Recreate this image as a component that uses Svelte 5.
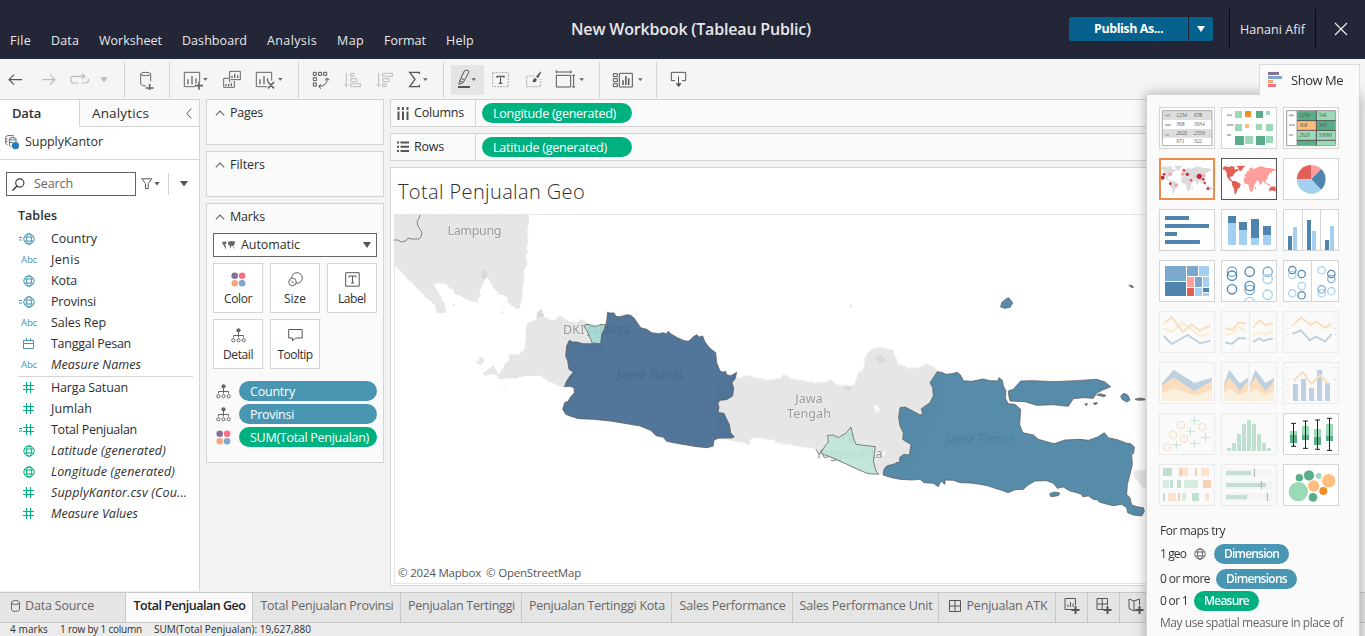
<script>
  // Spreads a label over the width reserved for it.
  function fit(node, width) {
    if (!width) return;
    node.style.letterSpacing = '0px';
    const natural = node.getBoundingClientRect().width;
    node.style.letterSpacing = `${(width - natural) / node.textContent.length}px`;
  }

  const menus = [['File', 21], ['Data', 28], ['Worksheet', 63], ['Dashboard', 65], ['Analysis', 50], ['Map', 27], ['Format', 42], ['Help', 28]];

  const dimensions = [
    ['geo', 'Country', 46, true], ['abc', 'Jenis', 29], ['geo', 'Kota', 26], ['geo', 'Provinsi', 45, true],
    ['abc', 'Sales Rep', 55], ['date', 'Tanggal Pesan', 80], ['abc', 'Measure Names', 90, false, true]
  ];
  const measures = [
    ['num', 'Harga Satuan', 77], ['num', 'Jumlah', 41], ['num', 'Total Penjualan', 86, true],
    ['geo', 'Latitude (generated)', 115, false, true], ['geo', 'Longitude (generated)', 124, false, true],
    ['num', 'SupplyKantor.csv (Cou...', 136, false, true], ['num', 'Measure Values', 87, false, true]
  ];

  const sheets = [
    ['Total Penjualan Geo', 112, 127, true], ['Total Penjualan Provinsi', 133, 148], ['Penjualan Tertinggi', 107, 121],
    ['Penjualan Tertinggi Kota', 136, 150], ['Sales Performance', 106, 121], ['Sales Performance Unit', 133, 146]
  ];

  const barat = 'M653,453 L657,456 L672,456 L678,466 L690,467 L712,461 L722,463 L732,471 L742,485 L752,500 L770,505 L785,515 L808,518 L818,515 L828,518 L835,511 L842,518 L862,530 L885,540 L897,540 L912,526 L920,521 L928,528 L938,525 L945,543 L960,562 L977,575 L980,605 L990,630 L1000,634 L1006,630 L1010,641 L1022,644 L1030,640 L1040,634 L1036,652 L1026,665 L1031,680 L1028,705 L1010,716 L990,718 L984,727 L987,740 L984,754 L1002,757 L1010,775 L1018,790 L1022,815 L1033,828 L1025,831 L1005,831 L985,832 L972,837 L969,856 L950,860 L920,857 L860,847 L830,841 L820,829 L798,824 L782,808 L750,795 L710,788 L660,780 L610,775 L565,773 L540,765 L527,760 L518,745 L524,725 L535,720 L540,710 L553,695 L552,680 L540,676 L523,677 L530,660 L540,645 L550,633 L537,625 L533,600 L527,585 L530,555 L538,538 L548,543 L560,543 L580,548 L632,548 L635,520 L643,508 L650,480 Z';
  const jakarta = 'M585,491 L597,490 L605,495 L620,495 L632,491 L646,491 L643,505 L635,520 L632,548 L606,546 L603,536 L597,525 L592,510 L584,500 Z';
  const timur = 'M712,272 L725,274 L738,280 L755,278 L773,274 L782,283 L790,299 L815,301 L850,294 L870,299 L893,300 L897,290 L907,298 L910,315 L918,330 L916,352 L925,368 L945,370 L962,385 L959,430 L968,455 L1000,462 L1015,475 L1040,482 L1062,488 L1095,477 L1140,475 L1165,478 L1193,468 L1213,455 L1225,470 L1255,477 L1280,487 L1292,488 L1303,498 L1301,517 L1295,520 L1297,550 L1290,580 L1282,610 L1280,640 L1290,650 L1295,672 L1315,678 L1330,680 L1333,692 L1325,705 L1300,702 L1283,695 L1280,680 L1265,670 L1240,674 L1215,668 L1198,663 L1192,656 L1180,655 L1165,645 L1148,647 L1144,640 L1130,635 L1110,630 L1090,618 L1072,622 L1060,607 L1040,599 L1005,600 L985,612 L970,625 L945,626 L925,635 L905,628 L885,622 L865,615 L840,610 L810,606 L780,605 L760,598 L735,597 L735,610 L723,600 L715,617 L700,607 L672,605 L660,595 L635,597 L600,595 L575,590 L549,582 L552,565 L560,555 L585,548 L590,544 L598,545 L600,528 L612,520 L628,522 L633,490 L620,483 L608,475 L610,455 L600,435 L596,408 L600,380 L615,378 L635,388 L660,402 L668,400 L664,383 L690,365 L700,345 L698,320 L690,305 L700,290 Z';
  const madura = 'M925,330 L940,325 L962,300 L1000,299 L1060,302 L1130,299 L1190,295 L1215,303 L1232,317 L1210,326 L1190,336 L1180,352 L1150,350 L1120,353 L1105,376 L1060,371 L1010,373 L975,362 L930,360 L927,348 Z';
  const yogya = 'M383,463 L400,462 L415,470 L440,455 L453,438 L460,470 L468,490 L490,493 L526,497 L523,520 L520,540 L528,570 L536,580 L505,578 L480,568 L430,545 L390,527 L362,517 L375,495 L385,483 Z';
  const islets = 'M902,78 L905,65 L918,54 L926,50 L938,66 L930,79 L915,82 Z M1287,13 h8 l6,6 h-8 z M1262,345 l10,-8 l12,6 l6,14 l-10,6 l-14,-8 z M1305,355 l14,-4 l16,3 v3 l-20,1 z M1190,342 l10,-4 l18,5 l-6,4 z M1154,369 l8,-1 l-2,6 z M1180,367 l10,-3 l2,4 l-8,3 z M1049,638 l14,-5 l16,3 l-4,8 l-22,3 z';

  const americas = 'M334,502 l4,-3 l14,2 l6,-3 l10,3 l-2,5 l4,3 l5,-3 l4,5 l-7,3 l-6,7 l-4,7 l-6,1 l-3,6 l6,5 l5,5 l-3,1 l-9,-6 l-7,-11 l-1,-12 l-5,-8 l-6,1z M370,500 l8,-3 h10 l11,1 l-6,4 l-4,7 l-6,5 l-4,-6 l-2,-6z M360,543 l7,-2 l8,4 l10,6 l-3,9 l-7,7 l-4,14 l-4,-2 l-2,-15 l-6,-11z';
  const eurasia = 'M398,522 l5,-5 l-2,-5 l6,2 l3,-8 l7,-4 l4,5 l9,-3 l10,-5 l10,1 l8,4 l12,0 l10,3 l6,2 l-2,4 l-8,0 l-2,7 l-4,-4 l-3,6 l-4,8 l-3,7 l-4,4 l3,9 l-4,1 l-4,-8 l-4,1 l-3,9 l-4,-1 l-4,-10 l-6,-2 l1,5 l-7,5 l-5,-9 l-6,-6 l-1,-5 l-6,-1 l-3,3 l-5,-4 l-5,1z';
  const africa = 'M396,531 l10,-3 l12,3 l6,12 l5,1 l-5,9 l-1,9 l-6,11 l-5,1 l-3,-13 l-2,-9 l-10,-2 l-4,-7z M426,560 l3,-2 l-1,8 l-3,1z';
  const oceania = 'M467,564 l6,-6 l5,1 l4,-2 l5,9 l-3,7 l-7,-3 l-10,1z M461,548 l6,5 l5,1 l-3,2 l-7,-4z';
</script>

{#snippet tx(text, width, cls = '')}
  <span class="tx {cls}" use:fit={width}>{text}</span>
{/snippet}

{#snippet globe()}
  <svg class="globe" viewBox="0 0 12 12" width="12" height="12"><g fill="none" stroke="currentColor" stroke-width="1"><circle cx="6" cy="6" r="5.200" /><ellipse cx="6" cy="6" rx="2.400" ry="5.200" /><path d="M1.500,4H10.500M1.500,8H10.500" /></g></svg>
{/snippet}

{#snippet field([kind, name, width, calc, italic])}
  <div class="field {kind}">
    <span class="calc">{#if calc}<svg width="4" height="4" viewBox="0 0 4 4"><path d="M0,.5h3M0,3h3" stroke="currentColor" /></svg>{/if}</span>
    <span class="kind">
      {#if kind === 'geo'}{@render globe()}
      {:else if kind === 'abc'}{@render tx('Abc', 16, 'abctext')}
      {:else if kind === 'date'}<svg width="11" height="11" viewBox="0 0 11 11"><path d="M.5,2.5h10v8h-10zM.5,5.5h10M3.5,0v3M7.5,0v3" fill="none" stroke="currentColor" /></svg>
      {:else}<svg width="11" height="11" viewBox="0 0 11 11"><path d="M3.5,0v11M7.5,0v11M0,3.5h11M0,7.5h11" fill="none" stroke="currentColor" stroke-width="1.1" /></svg>{/if}
    </span>
    {@render tx(name, width, italic ? 'it' : '')}
  </div>
{/snippet}

{#snippet chevron()}
  <svg width="10" height="6" viewBox="0 0 10 6"><path d="M.8,5.3L5,1L9.2,5.3" fill="none" stroke="#666" stroke-width="1.1" /></svg>
{/snippet}

{#snippet dots()}
  <svg width="15" height="15" viewBox="0 0 15 15"><circle cx="3.7" cy="3.7" r="3.3" fill="#86709b" /><circle cx="11.1" cy="3.7" r="3.3" fill="#fb6f82" /><circle cx="3.7" cy="11.2" r="3.3" fill="#f5a57b" /><circle cx="11.1" cy="11.2" r="3.3" fill="#82a4cb" /></svg>
{/snippet}

{#snippet tree()}
  <svg width="15" height="15" viewBox="0 0 15 15"><circle cx="7.5" cy="2.3" r="2.1" fill="#666" /><path d="M7.500,4v5.500M2.500,9.500V7.500H12.500V9.500" fill="none" stroke="#666" /><g fill="none" stroke="#666"><circle cx="2.300" cy="12.300" r="1.600" /><circle cx="7.500" cy="12.300" r="1.600" /><circle cx="12.700" cy="12.300" r="1.600" /></g></svg>
{/snippet}

{#snippet lines(color, d)}<path {d} fill="none" stroke={color} stroke-width="5.5" />{/snippet}

<div class="app">
  <header>
    <nav>{#each menus as [m, w]}{@render tx(m, w)}{/each}</nav>
    <h1>{@render tx('New Workbook (Tableau Public)', 240)}</h1>
    <div class="account">
      <button class="publish">{@render tx('Publish As...', 69)}</button>
      <button class="more"><svg width="8" height="6" viewBox="0 0 8 6"><path d="M0,0H8L4,6z" fill="#fff" /></svg></button>
      <div class="user">{@render tx('Hanani Afif', 65)}</div>
      <svg class="close" width="14" height="14" viewBox="0 0 14 14"><path d="M1,1L13,13M13,1L1,13" stroke="#eee" stroke-width="1.2" /></svg>
    </div>
  </header>

  <div class="toolbar">
    <svg width="32" height="38" viewBox="0 0 96 114"><path d="M66,59H28M42,44L27,59L42,74" fill="none" stroke="#555" stroke-width="3.500" /></svg>
    <svg width="32" height="38" viewBox="96 0 96 114"><path d="M126,59H164M150,44L165,59L150,74" fill="none" stroke="#bbb" stroke-width="3.500" /></svg>
    <svg width="60" height="38" viewBox="192 0 180 114"><path d="M235,69H222a9,9 0 0 1 0,-20H254M246,41l9,8l-9,8M244,69h14a9,9 0 0 0 7,-12" fill="none" stroke="#bbb" stroke-width="3.500" /><path d="M301,52h22l-11,15z" fill="#bbb" /></svg>
    <i class="sep"></i>
    <svg width="44" height="38" viewBox="375 0 132 114"><g fill="none" stroke="#666" stroke-width="3"><ellipse cx="437" cy="42" rx="15" ry="5" /><path d="M422,42v30q4,6 15,6M452,42v22" /></g><path d="M437,84h24M449,72v18" stroke="#666" stroke-width="5" /></svg>
    <i class="sep"></i>
    <svg width="128" height="38" viewBox="510 0 384 114">
      <g fill="none" stroke="#666" stroke-width="3"><path d="M585,80H553V37H599V65M689,67V34H721V59H692M688,55H671V82H703V63M801,80H769V37H815V62" /></g>
      <path d="M564,58v15M576,48v25M588,55v15M696,54v-7M704,54V41M713,54V46M678,78v-6M686,78v-6M694,78v-8M780,58v15M792,48v25M803,55v10" stroke="#666" stroke-width="4" />
      <path d="M585,77h24M597,65v24M804,66l18,19M822,66l-18,19" stroke="#666" stroke-width="5" /><path d="M609,54h14l-7,8zM834,54h14l-7,8z" fill="#666" />
    </svg>
    <i class="sep"></i>
    <svg width="101" height="38" viewBox="897 0 303 114">
      <g fill="none" stroke="#555" stroke-width="3"><path d="M940,37h9v9h-9zM956,37h9v9h-9zM971,37h9v9h-9zM940,53h9v9h-9zM940,69h9v9h-9zM957,79q25,-1 25,-24M963,73l-7,6l7,7M975,61l7,-7l7,7" /></g>
      <g fill="none" stroke="#bbb" stroke-width="3"><path d="M1039,39v40M1033,73l6,6l6,-6M1052,40h10v9h-10zM1052,56h19v9h-19zM1052,71h29v9h-29zM1136,39v40M1130,73l6,6l6,-6M1148,40h29v9h-29zM1148,56h19v9h-19zM1148,71h10v9h-10z" /></g>
    </svg>
    <svg width="43" height="38" viewBox="0 180 129 114"><path d="M58,222V217H29L45,238L29,260H58V254" fill="none" stroke="#555" stroke-width="4" /><path d="M69,235h14l-7,8z" fill="#666" /></svg>
    <i class="sep"></i>
    <svg width="155" height="38" viewBox="132 180 465 114">
      <path d="M153,195h99v89h-99z" fill="#e4e4e4" />
      <path d="M174,258h36v6h-36z" fill="#555" /><g fill="none" stroke="#555" stroke-width="3"><path d="M179,243L193,213q5,-5 12,-1q2,2 1,6L190,247zM184,235l10,6M178,244l-1,9l12,-5" /></g>
      <path d="M214,235h14l-7,8zM538,235h14l-7,8z" fill="#666" />
      <path d="M278,218h47v42h-47z" fill="none" stroke="#aaa" stroke-width="3" stroke-dasharray="6 3" /><path d="M291,234v-5h21v5M301.500,229v21M296,250h11" fill="none" stroke="#555" stroke-width="3.500" />
      <path d="M403,228H380v32h42v-24" fill="none" stroke="#aaa" stroke-width="3" stroke-dasharray="6 3" /><path d="M422,214L408,230l6,5l9,-17zM406,234q-7,1 -8,13q10,1 13,-8z" fill="#555" />
      <path d="M469,226h43v35h-43zM469,216h44M469,211v9M513,211v9M521,226v35M516,226h9M516,261h9" fill="none" stroke="#555" stroke-width="3" />
    </svg>
    <i class="sep"></i>
    <svg width="56" height="38" viewBox="600 180 168 114"><path d="M640,221h12v9h-12zM640,236h12v9h-12zM640,251h12v9h-12zM658,220h39v41h-39z" fill="none" stroke="#555" stroke-width="3" /><path d="M669,255V241M677.500,255V228M686,255V235" stroke="#555" stroke-width="4.500" /><path d="M714,235h14l-7,8z" fill="#666" /></svg>
    <i class="sep"></i>
    <svg width="44" height="38" viewBox="771 180 132 114"><path d="M825,242H814V217H857V242H846M835.500,229v26" fill="none" stroke="#555" stroke-width="3" /><path d="M827,250h18l-9,12z" fill="#555" /></svg>
  </div>

  <main>
    <aside class="data">
      <div class="sidetabs">
        <div class="on">{@render tx('Data', 29)}</div>
        <div class="off">{@render tx('Analytics', 57)}<svg width="6" height="11" viewBox="0 0 6 11"><path d="M5.300,.5L.8,5.500L5.300,10.500" fill="none" stroke="#555" /></svg></div>
      </div>
      <div class="source">
        <svg width="15" height="15" viewBox="0 0 15 15"><g fill="none" stroke="#666" stroke-width="1"><path d="M9,.9Q1,-.5 .7,2.500V8Q1,9.500 2.500,9.700M1,4h1.500M1,6.500h1.500" /><ellipse cx="7.700" cy="3.800" rx="3.300" ry="1.200" /><path d="M4.400,4V10.500q1,1 2,1M11,4V7M4.500,7.500h3" /></g><circle cx="10.500" cy="10.700" r="3.600" fill="#2a7ab5" /></svg>
        {@render tx('SupplyKantor', 78)}
      </div>
      <div class="searchrow">
        <div class="search"><svg width="13" height="13" viewBox="0 0 13 13"><circle cx="7.800" cy="5" r="4.100" fill="none" stroke="#333" stroke-width="1.100" /><path d="M5,8L.5,12.500" stroke="#333" stroke-width="1.400" /></svg>{@render tx('Search', 39)}</div>
        <svg class="funnel" width="19" height="12" viewBox="0 0 19 12"><path d="M.8,.8h10L7.200,5.500V10.500H4.500V5.500z" fill="none" stroke="#555" /><path d="M13.500,4h5l-2.500,3.500z" fill="#555" /></svg>
        <i></i>
        <svg width="8" height="6" viewBox="0 0 8 6"><path d="M0,0H8L4,5.500z" fill="#555" /></svg>
      </div>
      <div class="tables">{@render tx('Tables', 39)}</div>
      <div class="fields">{#each dimensions as f}{@render field(f)}{/each}</div>
      <div class="fields second">{#each measures as f}{@render field(f)}{/each}</div>
    </aside>

    <div class="cards">
      <section class="card small"><h2>{@render chevron()}{@render tx('Pages', 33)}</h2></section>
      <section class="card small"><h2>{@render chevron()}{@render tx('Filters', 35)}</h2></section>
      <section class="card marks">
        <h2>{@render chevron()}{@render tx('Marks', 35)}</h2>
        <div class="select">
          <svg width="13" height="9" viewBox="0 0 13 9"><path d="M0,1l4,-.5l1,1l-2,2l1,2l-.5,3l-1,-3l-1.500,-2zM6,1l3,-1l4,.5l-.5,3l-2,2l-1,-1l-1,3l-1,-3l-1.500,-1zM11,6l1.500,.5v1.500z" fill="#666" /></svg>
          {@render tx('Automatic', 59)}
          <svg class="arrow" width="8" height="6" viewBox="0 0 8 6"><path d="M0,0H8L4,6z" fill="#555" /></svg>
        </div>
        <div class="buttons">
          <div>{@render dots()}{@render tx('Color', 28)}</div>
          <div><svg width="15" height="15" viewBox="0 0 15 15"><g fill="none" stroke="#666"><circle cx="9" cy="6" r="5.300" /><circle cx="4.500" cy="10" r="3.800" fill="#fff" /><path d="M3,8.500l3,3" /></g></svg>{@render tx('Size', 22)}</div>
          <div><svg width="15" height="15" viewBox="0 0 15 15"><path d="M.7,.7h13.500v13.500h-13.500zM4,5.500V4h7v1.500M7.500,4v7M6,11h3" fill="none" stroke="#555" /></svg>{@render tx('Label', 28)}</div>
          <div>{@render tree()}{@render tx('Detail', 30)}</div>
          <div><svg width="15" height="15" viewBox="0 0 15 15"><path d="M.7,1.500h13.500v8.500H7.500L4.500,13V10H.7z" fill="none" stroke="#555" /></svg>{@render tx('Tooltip', 35)}</div>
        </div>
        <div class="pillrow">{@render tree()}<div class="pill blue">{@render tx('Country', 45)}</div></div>
        <div class="pillrow">{@render tree()}<div class="pill blue">{@render tx('Provinsi', 44)}</div></div>
        <div class="pillrow">{@render dots()}<div class="pill green">{@render tx('SUM(Total Penjualan)', 119)}</div></div>
      </section>
    </div>

    <div class="work">
      <div class="shelf">
        <div class="name"><svg width="12" height="13" viewBox="0 0 12 13"><path d="M1.500,0v3M1.500,4.500V13M6,0v3M6,4.500V13M10.500,0v3M10.500,4.500V13" stroke="#555" stroke-width="2" /></svg>{@render tx('Columns', 50)}</div>
        <div class="pill green">{@render tx('Longitude (generated)', 123)}</div>
      </div>
      <div class="shelf">
        <div class="name"><svg width="12" height="12" viewBox="0 0 12 12"><path d="M0,1.500h2M3.500,1.500H12M0,5.700h2M3.500,5.700H12M0,10h2M3.500,10H12" stroke="#555" stroke-width="2" /></svg>{@render tx('Rows', 30)}</div>
        <div class="pill green">{@render tx('Latitude (generated)', 114)}</div>
      </div>
      <div class="view">
        <div class="title">{@render tx('Total Penjualan Geo', 187)}</div>
        <div class="map">
          <svg width="965" height="369" viewBox="394 214 965 369">
            <defs>
              <filter id="coast" filterUnits="userSpaceOnUse" x="380" y="200" width="800" height="400" color-interpolation-filters="sRGB">
                <feTurbulence type="fractalNoise" baseFrequency=".15" numOctaves="2" seed="4" result="n" />
                <feDisplacementMap in="SourceGraphic" in2="n" scale="3" xChannelSelector="R" yChannelSelector="G" />
              </filter>
            </defs>
            <g class="land" filter="url(#coast)">
              <g transform="translate(390 160) scale(.33333)">
                <path d="M-20,130 H416 L417,180 L412,210 L413,240 L410,270 L410,310 L403,330 L398,380 L396,410 L390,440 L380,445 L365,432 L353,425 L352,410 L340,402 L325,400 L310,380 L300,360 L292,350 L282,355 L280,375 L268,390 L273,405 L265,410 L260,425 L240,420 L200,400 L180,380 L150,365 L132,370 L145,395 L165,430 L168,455 L140,457 L135,435 L110,410 L85,385 L60,360 L30,330 L-20,285 Z" />
                <path d="M523,680 L500,672 L470,657 L445,645 L410,645 L380,650 L340,653 L325,650 L310,638 L285,645 L278,635 L295,625 L310,612 L325,640 L340,622 L355,600 L362,578 L385,582 L402,565 L408,530 L405,505 L415,485 L440,475 L438,460 L448,447 L460,455 L462,470 L490,478 L512,465 L535,478 L560,485 L574,473 L600,490 L640,500 L640,640 L550,650 Z" />
                <path d="M254,600l12,2l2,-14l12,4l4,10l-12,12zM186,428l8,2l2,5h-6zM338,684h10v2h-10zM330,456l8,-4l2,8zM334,442h7v4h-7z" />
              </g>
              <g transform="translate(700 280) scale(.33333)">
                <path d="M108,290 L150,282 L160,288 L200,297 L235,292 L255,280 L275,293 L320,302 L370,305 L395,295 L415,312 L445,315 L465,310 L475,275 L490,265 L497,225 L510,208 L540,198 L578,205 L582,225 L595,247 L625,260 L660,260 L680,247 L700,255 L712,272 L720,400 L660,500 L640,560 L590,560 L549,580 L536,578 L480,570 L365,518 L340,502 L290,495 L230,485 L220,475 L165,470 L150,475 L147,488 L105,480 L40,470 L40,300 Z" />
                <path d="M448,72l6,-2l4,8l-8,4zM1298,568l24,-2l22,8v50l-18,-6l-22,-30z" />
              </g>
            </g>
            <g class="relief" filter="url(#coast)"><path d="M482,270l4,-1l2,7l-4,3l-3,-3zM536,313l5,-4l3,7h-7zM875,356l6,-3l5,6l-6,5zM845,386l7,-1l-1,3l-5,1zM874,427l6,-1l-2,2z" /></g>
            <g class="lake" filter="url(#coast)"><path d="M873,406l4,-2l4,5l-4,3zM880,452l6,-3l-2,7z" /></g>
            <path d="M394,239l4,0l3,2l5,-1l2,-3l3,1l8,0l2,-2l1,-5l-4,-6l-1,-4l2,-4l1,-3" class="border" />
            <g class="labels">
              <text x="474.500" y="234" textLength="54">Lampung</text>
              <text x="596.500" y="333" textLength="67">DKI Jakarta</text>
              <text x="650.500" y="378" textLength="66">Jawa Barat</text>
              <text x="809" y="402">Jawa</text>
              <text x="809" y="417" textLength="44">Tengah</text>
              <text x="848" y="442" textLength="12">DI</text>
              <text x="849" y="457" textLength="67">Yogyakarta</text>
              <text x="980" y="442" textLength="68">Jawa Timur</text>
            </g>
            <g class="regions">
              <g transform="translate(390 160) scale(.33333)"><path d={barat} fill="#3b658c" /><path d={jakarta} fill="#9fd8d2" /></g>
              <g transform="translate(700 280) scale(.33333)"><path d={timur} fill="#427da0" /><path d={madura} fill="#427da0" /><path d={islets} fill="#427da0" /><path d={yogya} fill="#bee5d9" /></g>
            </g>
          </svg>
          <div class="credit">{@render tx('© 2024 Mapbox', 83)}{@render tx('© OpenStreetMap', 95)}</div>
        </div>
      </div>
    </div>
  </main>

  <footer>
    <div class="tabs">
      <div class="source-tab"><svg width="9" height="12" viewBox="0 0 9 12"><path d="M.5,2.500V9.500q0,2 4,2t4,-2V2.500M.5,2.500q0,-2 4,-2t4,2t-4,2t-4,-2" fill="none" stroke="#666" /></svg>{@render tx('Data Source', 69)}</div>
      {#each sheets as [name, w, total, active]}
        <div class:active style="width:{total}px">{@render tx(name, w)}</div>
      {/each}
      <div class="dash"><svg width="12" height="12" viewBox="0 0 12 12"><path d="M.5,.5h11v11h-11zM.5,6h11M6,.5v11" fill="none" stroke="#555" /></svg>{@render tx('Penjualan ATK', 81)}</div>
      <div class="add"><svg width="16" height="16" viewBox="0 0 16 16"><path d="M8,11.500H1V.5H11.500V7M4,9V6.500M6.500,9V4M9,9V5.500" fill="none" stroke="#555" /><path d="M7.500,12H15.500M11.500,8v8" stroke="#555" stroke-width="2" /></svg></div>
      <div class="add"><svg width="16" height="16" viewBox="0 0 16 16"><path d="M8,11.500H1V.5H11.500V7M1,6H11.500M6.200,.5v11" fill="none" stroke="#555" /><path d="M7.500,12H15.500M11.500,8v8" stroke="#555" stroke-width="2" /></svg></div>
      <div class="add"><svg width="16" height="16" viewBox="0 0 16 16"><path d="M6,13V3L1,1V10.500L6,13L8,12M6,3L11.500,1V7" fill="none" stroke="#555" /><path d="M7.500,12H15.500M11.500,8v8" stroke="#555" stroke-width="2" /></svg></div>
    </div>
    <div class="status">{@render tx('4 marks', 38)}{@render tx('1 row by 1 column', 82)}{@render tx('SUM(Total Penjualan): 19,627,880', 157)}</div>
  </footer>

  <div class="showtab"><svg width="15" height="15" viewBox="0 0 15 15"><path d="M0,0H11V3H0z" fill="#86709b" /><path d="M0,4H14V7H0z" fill="#82a4cb" /><path d="M0,8H5V11H0z" fill="#f5a57b" /><path d="M0,12H8V15H0z" fill="#fb6f82" /></svg>{@render tx('Show Me', 52)}</div>
  <div class="showme">
    <div class="thumbs">
      <svg class="t" viewBox="327 321 168 126">
        <path d="M337,332H486V437H337z" fill="#fff" /><path d="M337,332H486V360H337zM337,387H486V413H337z" fill="#ddd" /><path d="M337,332H486V437H337z" fill="none" stroke="#aaa" stroke-width="3" /><path d="M345,346h15M345,375h18M345,405h12" stroke="#aaa" stroke-width="5" />
        <g class="num"><text x="379" y="352">1234</text><text x="432" y="352">678</text><text x="379" y="379">368</text><text x="432" y="379">3034</text><text x="379" y="405">2620</text><text x="432" y="405">2559</text><text x="379" y="430">971</text><text x="432" y="430">322</text></g>
      </svg>
      <svg class="t" viewBox="513 321 168 126">
        <path d="M531,346h15M531,375h19M531,405h12" stroke="#bbb" stroke-width="6" />
        <path d="M555,333h21v21h-21zM648,333h12v12h-12zM555,372h21v21h-21zM618,372h18v18h-18zM648,372h21v21h-21zM585,408h24v24h-24zM648,408h21v21h-21z" fill="#9cdab7" /><path d="M618,333h21v21h-21zM555,408h27v27h-27zM618,408h27v27h-27z" fill="#59ad89" /><path d="M585,333h18v18h-18z" fill="#f28e2b" /><path d="M585,372h12v12h-12z" fill="#ffbe7d" />
      </svg>
      <svg class="t" viewBox="699 321 168 126">
        <path d="M741,332h58v31h-58zM799,363h58v29h-58zM741,420h58v16h-58z" fill="#59ad89" /><path d="M799,332h58v31h-58zM741,392h116v28h-116zM799,420h58v16h-58z" fill="#9cdab7" /><path d="M741,363h58v29h-58z" fill="#ffbe7d" />
        <path d="M710,332H857V437H710zM741,332V437" fill="none" stroke="#999" stroke-width="3" /><path d="M741,362H857M741,391H857M741,421H857M799,332V437" stroke="#555" stroke-width="3" /><path d="M717,346h14M717,375h18M717,405h12" stroke="#aaa" stroke-width="5" />
        <g class="num"><text x="748" y="351">1234</text><text x="806" y="351">546</text><text x="748" y="382">368</text><text x="806" y="382">340</text><text x="748" y="411">2620</text><text x="806" y="411">53890</text></g>
      </svg>
      <svg class="t orange" viewBox="333 480 156 114">
        <g fill="#dcdcdc"><path d={americas} /><path d={eurasia} /><path d={africa} /><path d={oceania} /></g>
        <g fill="#c4283c"><circle cx="338" cy="533" r="6" /><circle cx="342" cy="523" r="4" /><circle cx="412" cy="523" r="5" /><circle cx="448" cy="529" r="8" /><circle cx="361" cy="551" r="4" /><circle cx="460" cy="538" r="4" /><circle cx="474" cy="566" r="4" /></g><g fill="#e15f55"><circle cx="402" cy="511" r="5" /><circle cx="464" cy="548" r="4.500" /><circle cx="423" cy="541" r="4" /></g><g fill="#ff9d9a"><circle cx="361" cy="523" r="5" /><circle cx="398" cy="522" r="5" /><circle cx="378" cy="556" r="5" /><circle cx="462" cy="527" r="4" /></g>
      </svg>
      <svg class="t dark" viewBox="330 477 162 120"><g transform="translate(-14 -12) scale(1.040 1.024)"><path d={americas} fill="#e15f55" /><path d={eurasia} fill="#ff9d9a" /><path d={africa} fill="#ff9d9a" /><path d={oceania} fill="#e15f55" /></g></svg>
      <svg class="t" viewBox="699 474 168 126"><g transform="translate(783.500 538)"><path d="M0,0V-43A43,43 0 0 0 -43,0z" fill="#e15f55" /><path d="M0,0V-43A43,43 0 0 1 30,-31z" fill="#ff9d9a" /><path d="M0,0L30,-31A43,43 0 0 1 30,31z" fill="#4e84ae" /><path d="M0,0L30,31A43,43 0 0 1 -43,0z" fill="#a3cff0" /></g></svg>

      <svg class="t" viewBox="42 27 168 126"><path d="M60,48h72v12h-72zM60,72h132v12h-132zM60,96h36v12h-36zM60,120h105v12h-105z" fill="#4e84ae" /></svg>
      <svg class="t" viewBox="228 27 168 126"><path d="M249,69h24v66h-24zM282,90h24v45h-24zM318,114h24v21h-24zM354,105h24v30h-24z" fill="#a3cff0" /><path d="M249,48h24v21h-24zM282,66h24v24h-24zM318,57h24v57h-24zM354,78h24v27h-24z" fill="#4e84ae" /></svg>
      <svg class="t" viewBox="414 27 168 126"><path d="M472.500,27V153M526.500,27V153" stroke="#d4d4d4" stroke-width="3" /><path d="M429,108h12v42h-12zM486,60h12v90h-12zM540,120h12v30h-12z" fill="#4e84ae" /><path d="M444,81h12v69h-12zM501,93h12v57h-12zM555,78h12v72h-12z" fill="#a3cff0" /></svg>

      <svg class="t" viewBox="42 180 168 126"><path d="M60,198h63v45h-63zM126,198h33v30h-33zM150,231h21v30h-21z" fill="#7ba9ce" /><path d="M60,246h63v42h-63zM174,264h18v12h-18z" fill="#4e84ae" /><path d="M162,198h30v30h-30zM174,231h18v30h-18zM150,264h21v24h-21zM174,279h18v9h-18z" fill="#a3cff0" /><path d="M126,231h21v30h-21z" fill="#ff9d9a" /><path d="M126,264h21v24h-21z" fill="#e15f55" /></svg>
      <svg class="t" viewBox="228 180 168 126"><g fill="none" stroke-width="4"><g stroke="#7ba9ce"><circle cx="261" cy="215" r="14" /><circle cx="314" cy="270" r="14" /><circle cx="368" cy="215" r="14" /></g><g stroke="#a3cff0"><circle cx="368" cy="237" r="14" /><circle cx="368" cy="284" r="14" /><circle cx="314" cy="306" r="14" /></g><g stroke="#4e84ae"><circle cx="261" cy="227" r="14" /><circle cx="261" cy="268" r="14" /><circle cx="314" cy="215" r="14" /><circle cx="314" cy="258" r="14" /></g></g></svg>
      <svg class="t" viewBox="414 180 168 126"><path d="M499.500,180V306" stroke="#d4d4d4" stroke-width="3" /><g fill="none" stroke-width="3.500"><g stroke="#a3cff0"><circle cx="442" cy="225" r="11" /><circle cx="470" cy="258" r="11" /><circle cx="442" cy="280" r="11" /><circle cx="530" cy="211" r="11" /><circle cx="530" cy="280" r="11" /><circle cx="559" cy="274" r="11" /></g><g stroke="#7ba9ce"><circle cx="559" cy="237" r="11" /><circle cx="530" cy="268" r="11" /></g><g stroke="#4e84ae"><circle cx="442" cy="210" r="11" /><circle cx="470" cy="222" r="11" /><circle cx="470" cy="286" r="11" /><circle cx="559" cy="222" r="11" /></g></g></svg>

      <svg class="t off" viewBox="42 333 168 126">{@render lines('#faebcb', 'M56,386L80,395L114,368L165,408L196,401')}{@render lines('#fbdcbc', 'M58,369L80,351L113,395L141,373L163,392L196,377')}{@render lines('#bdd0df', 'M56,408L80,432L128,405L165,430L196,422')}</svg>
      <svg class="t off" viewBox="228 333 168 126"><path d="M313.500,333V459" stroke="#e9e9e9" stroke-width="3" />{@render lines('#fbdcbc', 'M240,384L261,389L281,368L303,371M324,384L343,361L361,375L384,370')}{@render lines('#faebcb', 'M240,405L261,401L282,380L300,393M322,405L343,397L361,404L384,391')}{@render lines('#bdd0df', 'M240,427L261,432L281,414L303,415M324,426L343,415L355,423L369,418L384,416')}</svg>
      <svg class="t off" viewBox="414 333 168 126">{@render lines('#fbdcbc', 'M442,377L468,352L496,375L512,365L541,384L559,370')}{@render lines('#bdd0df', 'M442,402L468,391L494,421L512,410L541,425L559,402')}<path d="M427.500,348V444M571,348V444" stroke="#e5e5e5" stroke-width="8" stroke-dasharray="3 15" /></svg>

      <svg class="t off" viewBox="42 486 168 126"><path d="M51,550L86,509L148,549L201,533V603H51z" fill="#bdd0df" /><path d="M51,556L86,532L148,574L201,542V603H51z" fill="#fbdcbc" /><path d="M51,579L86,565L148,586L201,570V603H51z" fill="#faf0de" /></svg>
      <svg class="t off" viewBox="228 486 168 126">{#each [0, 78] as dx}<g transform="translate({dx} 0)"><path d="M237,552L253,509L284,550L309,533V603H237z" fill="#bdd0df" /><path d="M237,558L253,531L284,574L309,542V603H237z" fill="#fbdcbc" /><path d="M237,580L253,565L284,586L309,570V603H237z" fill="#faf0de" /></g>{/each}<path d="M312,486V612" stroke="#eee" stroke-width="4" /></svg>
      <svg class="t off" viewBox="414 486 168 126"><path d="M444,552h15v51h-15zM468,537h15v66h-15zM492,564h15v39h-15zM516,510h15v93h-15zM540,549h15v54h-15z" fill="#bdd0df" />{@render lines('#fbdcbc', 'M446,542L473,516L499,552L525,526L551,552')}<path d="M427.500,501V597M571,501V597" stroke="#e5e5e5" stroke-width="8" stroke-dasharray="3 15" /></svg>

      <svg class="t off" viewBox="42 24 168 126"><g fill="none" stroke="#fbe0c8" stroke-width="4"><circle cx="108" cy="60" r="11" /><circle cx="171" cy="66" r="11" /><circle cx="84" cy="90" r="11" /><circle cx="117" cy="102" r="11" /><circle cx="66" cy="126" r="11" /></g><path d="M135,46h27M148,33v27M123,79h27M136,66v27M168,97h27M181,84v27M81,119h27M94,106v27M135,115h27M148,102v27" stroke="#c5e1d5" stroke-width="3" /></svg>
      <svg class="t off" viewBox="228 24 168 126"><path d="M246,129h12v9h-12zM261,114h12v24h-12zM276,87h12v51h-12zM291,57h12v81h-12zM306,45h12v93h-12zM321,57h12v81h-12zM336,87h12v51h-12zM351,114h12v24h-12zM366,129h12v9h-12z" fill="#bfe0d0" /></svg>
      <svg class="t" viewBox="414 24 168 126"><path d="M435,78h21v12h-21zM471,63h21v27h-21zM507,72h21v24h-21zM543,57h21v36h-21z" fill="#9cdab7" /><path d="M435,90h21v24h-21zM471,90h21v15h-21zM507,96h21v24h-21zM543,93h21v15h-21z" fill="#59ad89" /><path d="M445.500,55V124M438,55h15M438,124h15M481.500,48V130M474,48h15M474,130h15M517.500,45V133M510,45h15M510,133h15M553.500,40V136M546,40h15M546,136h15" stroke="#222" stroke-width="3" /></svg>

      <svg class="t off" viewBox="42 177 168 126"><path d="M54,189h27v24h-27zM75,225h9v24h-9zM96,225h12v24h-12zM54,264h6v24h-6zM141,264h21v24h-21z" fill="#bfe0d0" /><path d="M54,225h18v24h-18zM117,225h42v24h-42zM111,264h12v24h-12z" fill="#d6ede1" /><path d="M102,189h12v24h-12zM150,189h6v24h-6zM174,225h24v24h-24zM99,264h6v24h-6z" fill="#f6d2b0" /><path d="M117,189h12v24h-12zM168,189h24v24h-24zM69,264h24v24h-24zM180,264h12v24h-12z" fill="#fbe3cd" /></svg>
      <svg class="t off" viewBox="228 177 168 126"><path d="M243,192h138v24h-138zM243,228h138v24h-138zM243,264h138v24h-138z" fill="#f4f4f4" /><path d="M243,198h75v12h-75zM243,234h120v12h-120zM243,270h63v12h-63z" fill="#c2e0d3" /><path d="M328,192v24M349,228v24M367,264v24" stroke="#aaa" stroke-width="3" /></svg>
      <svg class="t" viewBox="414 177 168 126"><g fill="#59ad89"><circle cx="463" cy="218" r="11" /><circle cx="492" cy="211" r="15.500" /><circle cx="504" cy="277" r="13" /></g><g fill="#9cdab7"><circle cx="460" cy="260" r="29" /><circle cx="521" cy="213" r="9" /></g><g fill="#ffbe7d"><circle cx="551" cy="227" r="20" /><circle cx="506" cy="243" r="17" /></g><circle cx="535" cy="258" r="12" fill="#f28e2b" /></svg>
    </div>
    <div class="advice">
      <div class="line head">{@render tx('For maps try', 65)}</div>
      <div class="line one">{@render tx('1 geo', 26)}{@render globe()}<b class="pill blue" style="width:75px">{@render tx('Dimension', 55)}</b></div>
      <div class="line two">{@render tx('0 or more', 50)}<b class="pill blue" style="width:81px">{@render tx('Dimensions', 61)}</b></div>
      <div class="line three">{@render tx('0 or 1', 28)}<b class="pill green" style="width:65px">{@render tx('Measure', 45)}</b></div>
      <div class="line last">{@render tx('May use spatial measure in place of', 183)}</div>
    </div>
  </div>
</div>

<style>
  :global(body) { margin: 0; overflow: hidden; }
  .app { position: relative; width: 1365px; height: 636px; overflow: hidden; background: #f2f2f2; color: #2e2e2e; font: 12.5px/16px "Open Sans", "Noto Sans", sans-serif; display: flex; flex-direction: column; }
  .app * { box-sizing: border-box; }
  svg { flex: none; display: block; }
  .tx { display: inline-block; flex: none; white-space: nowrap; }
  .it { font-style: italic; }
  header { flex: none; height: 59px; background: #232636; color: #e8e8ea; display: flex; }
  nav { display: flex; gap: 20px; padding: 33px 0 0 10px; width: 571px; flex: none; }
  h1 { margin: 20px 0 0; width: 498px; font-size: 16px; line-height: 18px; font-weight: 600; }
  .account { display: flex; align-items: flex-start; }
  button { font: inherit; border: 0; padding: 0; margin: 17px 0 0; height: 24px; background: #06618d; color: #fff; display: flex; align-items: center; justify-content: center; }
  .publish { width: 119px; font-weight: 700; border-radius: 2px 0 0 2px; margin-right: 1px; }
  .more { width: 24px; border-radius: 0 2px 2px 0; }
  .user { margin: 9px 0 0 16px; height: 40px; width: 87px; border: solid #090a10; border-width: 0 1px; display: flex; align-items: center; justify-content: center; padding-top: 1px; }
  .close { margin: 22px 0 0 18px; }
  .toolbar { flex: none; height: 40px; padding-top: 1px; background: #f5f5f5; display: flex; }
  .sep { flex: none; width: 1px; height: 36px; margin-top: 2px; background: #d4d4d4; }
  main { flex: none; height: 493px; display: flex; }
  .data { width: 200px; height: 492px; background: #fff; border-right: 1px solid #d4d4d4; flex: none; }
  .sidetabs { display: flex; height: 28px; font-size: 13.5px; }
  .sidetabs div { display: flex; align-items: center; border-top: 1px solid #d4d4d4; }
  .sidetabs .on { width: 79px; padding: 0 0 2px 12px; font-weight: 600; font-size: 13px; }
  .sidetabs .off { width: 120px; background: #fafafa; border-left: 1px solid #d4d4d4; border-bottom: 1px solid #d4d4d4; padding: 0 7px 0 12px; justify-content: space-between; }
  .source { height: 33px; border-bottom: 1px solid #d4d4d4; display: flex; align-items: center; gap: 5px; padding: 0 0 2px 5px; }
  .searchrow { display: flex; align-items: center; height: 24px; margin: 12px 0 0 6px; }
  .search { width: 130px; height: 24px; border: 1px solid #666; display: flex; align-items: center; gap: 9px; padding-left: 5px; color: #666; }
  .funnel { margin: 0 8px 0 5px; }
  .searchrow i { width: 1px; height: 22px; background: #d4d4d4; margin-right: 11px; }
  .tables { margin: 12px 0 5px 18px; height: 15px; line-height: 15px; font-weight: 600; }
  .field { height: 21px; display: flex; align-items: center; }
  .fields.second { border-top: 1px solid #d4d4d4; margin: 1px 6px 0 18px; }
  .fields.second .field { margin-left: -18px; width: 195px; }
  .geo .calc, .geo .kind, .abc .kind, .date .kind { color: #4996b2; }
  .num .kind, .num .calc, .second .geo .kind { color: #00b180; }
  .calc { width: 23px; padding-left: 19px; }
  .kind { width: 28px; display: flex; }
  .abctext { font-size: 9.5px; margin-left: -2px; }
  .cards { padding-left: 6px; width: 190px; flex: none; display: flex; flex-direction: column; gap: 6px; }
  .card { width: 178px; border: 1px solid #d4d4d4; background: #fafafa; }
  .card.small { height: 46px; }
  .card.marks { height: 260px; }
  h2 { margin: 0; padding: 5px 0 0 8px; font-size: 12.5px; line-height: 16px; font-weight: 400; display: flex; gap: 5px; align-items: center; }
  .select { margin: 8px 0 0 6px; width: 164px; height: 24px; border: 1px solid #666; background: #fff; display: flex; align-items: center; gap: 6px; padding: 0 5px 0 8px; }
  .select .arrow { margin-left: auto; }
  .buttons { display: grid; grid-template-columns: repeat(3, 50px); gap: 6px 7px; margin: 6px 0 0 6px; }
  .buttons div { width: 50px; height: 50px; border: 1px solid #d4d4d4; background: #fff; display: flex; flex-direction: column; align-items: center; gap: 4px; padding-top: 8px; font-size: 12px; line-height: 15px; }
  .pillrow { display: flex; height: 20px; align-items: center; margin: 3px 0 0 9px; gap: 8px; }
  .buttons + .pillrow { margin-top: 12px; }
  .pill { height: 20px; border-radius: 10px; color: #fff; display: flex; align-items: center; }
  .pillrow .pill { width: 138px; padding: 1px 0 0 11px; }
  .blue { background: #4996b2; }
  .green { background: #00b180; }
  .work { flex: none; width: 970px; display: flex; flex-direction: column; gap: 6px; }
  .shelf { height: 28px; flex: none; background: #fafafa; border: 1px solid #d4d4d4; display: flex; }
  .name { width: 85px; border-right: 1px solid #d4d4d4; display: flex; align-items: center; gap: 5px; padding-left: 6px; }
  .shelf .pill { margin: 3px 0 0 6px; width: 150px; padding: 1px 0 0 11px; }
  .view { height: 419px; border: 1px solid #d4d4d4; background: #fff; padding-left: 3px; }
  .title { height: 46px; padding: 11px 0 0 4px; font-size: 20px; line-height: 26px; font-weight: 300; }
  .map { height: 370px; border: solid #e5e5e5; border-width: 1px 0 1px 1px; position: relative; }
  .map > svg { margin-left: -1px; }
  .credit { position: absolute; left: 3px; bottom: 3px; font: 11.5px/14px "Open Sans", sans-serif; color: #555; display: flex; gap: 5px; }
  .land { fill: #e6e6e6; }
  .relief { fill: #dadada; }
  .lake { fill: #fafafa; }
  .border { fill: none; stroke: #666; stroke-width: .8; }
  .labels { font: 12.5px "Noto Sans", sans-serif; fill: #999; text-anchor: middle; stroke: #ededed; stroke-width: 1.5px; paint-order: stroke; }
  .regions path { fill-opacity: .89; stroke: #5b5b5b; stroke-width: 3; stroke-opacity: .75; stroke-linejoin: round; }
  footer { flex: 1; background: #ebebeb; }
  .tabs { height: 31px; border: solid #c9c9c9; border-width: 1px 0; background: #e5e5e5; display: flex; color: #666; }
  .tabs > div { flex: none; border-right: 1px solid #c9c9c9; display: flex; align-items: center; justify-content: center; padding: 0 0 3px 1px; }
  .tabs .source-tab { width: 126px; justify-content: flex-start; padding-left: 11px; gap: 5px; }
  .tabs .active { background: #fafafa; color: #222; font-weight: 600; }
  .tabs .dash { width: 117px; gap: 6px; padding-left: 2px; }
  .tabs .add { width: 32px; padding-left: 0; }
  .status { display: flex; gap: 12px; padding-left: 10px; height: 13px; font-size: 10px; line-height: 13px; }
  .showtab { position: absolute; z-index: 2; left: 1259px; top: 64px; width: 101px; height: 32px; background: #fafafa; border: 1px solid #dcdcdc; border-bottom: 0; display: flex; align-items: center; padding: 0 0 2px 8px; gap: 8px; font-size: 13px; }
  .showme { position: absolute; z-index: 1; left: 1146px; top: 94px; width: 214px; height: 560px; background: #fafafa; border: 1px solid #d4d4d4; box-shadow: 0 0 12px rgba(0, 0, 0, .3); padding: 12px; }
  .thumbs { display: grid; grid-template-columns: repeat(3, 56px); gap: 9px 6px; }
  .t { width: 56px; height: 42px; background: #fff; outline: 1px solid #d4d4d4; outline-offset: -1px; overflow: hidden; }
  .t.orange { border: 2px solid #ec8c48; outline: 0; }
  .t.dark { border: 1px solid #555; outline: 0; }
  .t.off { background: #fafafa; outline-color: #ebebeb; }
  .num text { font: italic 16px "Liberation Serif", serif; fill: #555; }
  .advice { display: flex; flex-direction: column; font-size: 12px; color: #333; }
  .line { display: flex; align-items: center; height: 20px; padding-left: 1px; }
  .line .pill { justify-content: center; font-weight: 600; }
  .head { margin-top: 15px; }
  .one { margin-top: 3px; }
  .one .globe { margin: 0 8px 0 8px; color: #666; }
  .two { margin-top: 5px; }
  .two .pill, .three .pill { margin-left: 6px; }
  .three { margin-top: 2px; }
  .last { margin-top: 2px; color: #666; }
</style>
